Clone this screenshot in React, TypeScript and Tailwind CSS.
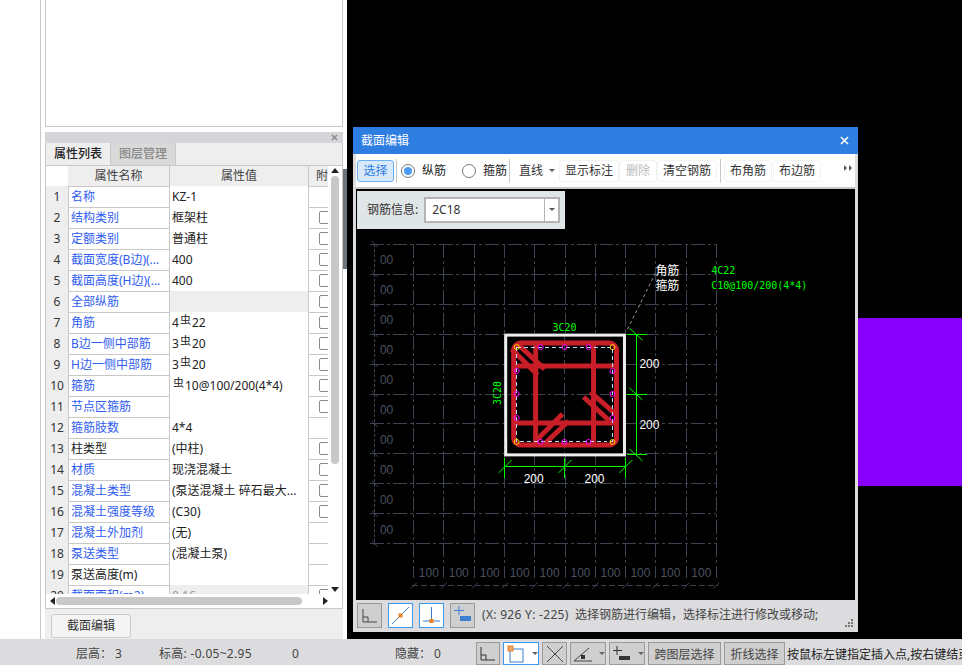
import React from "react";

const font = "font-['Noto_Sans','Noto_Sans_CJK_SC',sans-serif]";

interface RowData {
  name: string;
  value?: React.ReactNode;
  black?: boolean;
  check?: boolean;
  gray?: boolean;
}

function Steel() {
  return <span className="text-[11px] leading-[0] align-[3px] mx-px">虫</span>;
}

const rows: RowData[] = [
  { name: "名称", value: "KZ-1" },
  { name: "结构类别", value: "框架柱", check: true },
  { name: "定额类别", value: "普通柱", check: true },
  { name: "截面宽度(B边)(...", value: "400", check: true },
  { name: "截面高度(H边)(...", value: "400", check: true },
  { name: "全部纵筋", check: true, gray: true },
  { name: "角筋", value: <>4<Steel />22</>, check: true },
  { name: "B边一侧中部筋", value: <>3<Steel />20</>, check: true },
  { name: "H边一侧中部筋", value: <>3<Steel />20</>, check: true },
  { name: "箍筋", value: <><Steel />10@100/200(4*4)</>, check: true },
  { name: "节点区箍筋", check: true },
  { name: "箍筋肢数", value: "4*4" },
  { name: "柱类型", value: "(中柱)", black: true, check: true },
  { name: "材质", value: "现浇混凝土", check: true },
  { name: "混凝土类型", value: "(泵送混凝土 碎石最大...", check: true },
  { name: "混凝土强度等级", value: "(C30)", check: true },
  { name: "混凝土外加剂", value: "(无)" },
  { name: "泵送类型", value: "(混凝土泵)" },
  { name: "泵送高度(m)", black: true },
  { name: "截面面积(m2)", value: <span className="text-[#999]">0.16</span>, check: true, gray: true },
];

function PropertyRow({ row, index }: { row: RowData; index: number }) {
  return (
    <div className="grid grid-cols-[22px_101px_139px_20px] h-[21px] shrink-0 text-[12px] leading-[21px]">
      <div className="bg-[#eeeeee] border-b border-b-[#c8c8c8] text-center text-[#333]">{index + 1}</div>
      <div className={`border-l border-b border-[#c8c8c8] pl-[2px] whitespace-nowrap overflow-hidden ${row.black ? "text-[#222]" : "text-[#2f5cf0]"}`}>
        {row.name}
      </div>
      <div className={`border-l border-b border-[#c8c8c8] pl-[2px] whitespace-nowrap overflow-hidden text-[#222] ${row.gray ? "bg-[#eeeeee]" : "bg-white"}`}>
        {row.value}
      </div>
      <div className="border-l border-b border-[#c8c8c8] overflow-hidden pl-[10px] pt-[4px]">
        {row.check && <div className="w-[14px] h-[13px] border border-[#8a8a8a] rounded-[2px] bg-white" />}
      </div>
    </div>
  );
}

function Arrow({ dir }: { dir: "up" | "down" | "left" | "right" }) {
  const pts = { up: "0,6 8,6 4,1", down: "0,1 8,1 4,6", left: "6,0 6,8 1,4", right: "1,0 1,8 6,4" }[dir];
  return (
    <svg width="8" height="8" viewBox="0 0 8 8" className="shrink-0">
      <polygon points={pts} fill="#222" />
    </svg>
  );
}

function PropertyPanel() {
  return (
    <div className="flex-1 flex flex-col bg-[#eeeeee] min-h-0">
      <div className="h-[11px] bg-[#d4d5d9] flex items-center justify-end pr-[5px] shrink-0">
        <svg width="7" height="7" viewBox="0 0 7 7">
          <path d="M1 1L6 6M6 1L1 6" stroke="#8c8c8c" strokeWidth="1.6" />
        </svg>
      </div>
      <div className="h-[466px] border border-[#c8c8c8] border-t-0 flex flex-col shrink-0 bg-white">
        <div className="h-[23px] flex bg-[#eeeeee] border-b border-[#c8c8c8] shrink-0 text-[12px] leading-[22px]">
          <div className="w-[65px] text-center font-medium text-[#222] border-r border-[#c8c8c8]">属性列表</div>
          <div className="w-[65px] text-center font-medium text-[#8a8a8a] bg-[#d9d9d9] border-r border-[#c8c8c8]">图层管理</div>
        </div>
        <div className="flex flex-1 min-h-0">
          <div className="w-[282px] flex flex-col overflow-hidden">
            <div className="grid grid-cols-[22px_101px_139px_20px] h-[20px] shrink-0 text-[12px] leading-[20px] text-[#444] text-center">
              <div className="bg-white" />
              <div className="bg-[#eeeeee] border-b border-[#c8c8c8]">属性名称</div>
              <div className="bg-[#eeeeee] border-l border-b border-[#c8c8c8]">属性值</div>
              <div className="bg-[#eeeeee] border-l border-b border-[#c8c8c8] text-left pl-[7px] overflow-hidden whitespace-nowrap">附加</div>
            </div>
            <div className="h-[408px] overflow-hidden flex flex-col">
              {rows.map((row, i) => (
                <PropertyRow key={row.name} row={row} index={i} />
              ))}
            </div>
          </div>
          <div className="flex-1 flex flex-col items-center pt-[1px] pr-[1px]">
            <Arrow dir="up" />
            <div className="w-[8px] h-[288px] mt-[1px] rounded-[4px] bg-[#c8c8c8]" />
            <div className="flex-1" />
            <Arrow dir="down" />
          </div>
        </div>
        <div className="h-[14px] flex items-center shrink-0 pl-[3px] bg-white">
          <Arrow dir="left" />
          <div className="w-[246px] h-[8px] ml-[-1px] rounded-[4px] bg-[#c8c8c8]" />
          <div className="w-[20px]" />
          <Arrow dir="right" />
        </div>
      </div>
      <div className="pl-[6px] pt-[3px]">
        <button className="w-[80px] h-[24px] border border-[#c6ccd6] rounded-[3px] bg-[#f4f4f4] text-[12px] text-[#333]">截面编辑</button>
      </div>
    </div>
  );
}

function Separator() {
  return <div className="w-px h-[24px] bg-[#c8c8c8]" />;
}

function ToolButton({ label, width, muted }: { label: string; width: string; muted?: boolean }) {
  return (
    <div className={`h-[22px] ${width} text-center leading-[20px] border border-[#f3f3f3] rounded-[3px] ${muted ? "text-[#bbb]" : "text-[#333]"}`}>
      {label}
    </div>
  );
}

function Radio({ on }: { on?: boolean }) {
  return (
    <div className="w-[14px] h-[14px] rounded-full border border-[#777] bg-white flex items-center justify-center">
      {on && <div className="w-[8px] h-[8px] rounded-full bg-[#4a9bf0]" />}
    </div>
  );
}

function Toolbar() {
  return (
    <div className="h-[35px] bg-white border-b-2 border-[#c8c8c8] flex items-center pl-[1px] shrink-0 text-[12px]">
      <div className="w-[37px] h-[22px] rounded-[3px] border border-[#6ab0f5] bg-[#d8e9fb] text-[#2e7de1] text-center leading-[20px]">选择</div>
      <div className="w-[2px]" />
      <Separator />
      <div className="w-[4px]" />
      <Radio on />
      <span className="ml-[7px] text-[#222]">纵筋</span>
      <div className="w-[16px]" />
      <Radio />
      <span className="ml-[7px] text-[#222]">箍筋</span>
      <div className="w-[2px]" />
      <Separator />
      <div className="w-[4px]" />
      <div className="w-[45px] h-[22px] pl-[5px] text-[#333] flex items-center">
        直线
        <svg width="6" height="4" viewBox="0 0 6 4" className="ml-[6px]"><polygon points="0,0 6,0 3,3" fill="#555" /></svg>
      </div>
      <ToolButton label="显示标注" width="w-[60px]" />
      <ToolButton label="删除" width="w-[38px]" muted />
      <ToolButton label="清空钢筋" width="w-[60px]" />
      <div className="w-[3px]" />
      <Separator />
      <div className="w-[3px]" />
      <ToolButton label="布角筋" width="w-[48px]" />
      <div className="w-px" />
      <ToolButton label="布边筋" width="w-[48px]" />
      <div className="flex-1" />
      <svg width="8" height="6" viewBox="0 0 8 6" className="mr-[3px] mb-[6px]">
        <polygon points="0,0 0,6 3,3" fill="#555" />
        <polygon points="5,0 5,6 8,3" fill="#555" />
      </svg>
    </div>
  );
}

const gridX = [414, 444, 475, 505, 535, 566, 596, 626, 656, 687, 717];
const gridY = [244, 274, 304, 334, 364, 394, 424, 454, 484, 514, 544];
const dim = "#3c4452";

function Drawing() {
  const red = "#c81e28";
  const green = "#00ff00";
  const topBars = [541, 565, 589];
  const sideBars = [371, 394, 418];
  return (
    <svg viewBox="356 189 500 411" className="w-full h-full block">
      <g stroke={dim} fill="none" shapeRendering="crispEdges">
        {gridY.map((y) => (
          <line key={y} x1={370} y1={y} x2={717} y2={y} strokeDasharray="14 3 3 3" />
        ))}
        {gridX.map((x) => (
          <line key={x} x1={x} y1={244} x2={x} y2={578} strokeDasharray="14 3 3 3" />
        ))}
        <line x1={375} y1={244} x2={375} y2={545} strokeDasharray="3 2" />
        <line x1={412} y1={586} x2={719} y2={586} strokeDasharray="6 3" />
      </g>
      <g stroke={dim} fill="none">
        {gridY.map((y) => (
          <line key={y} x1={372} y1={y - 3} x2={378} y2={y + 3} />
        ))}
        {gridX.map((x) => (
          <line key={x} x1={x - 3} y1={589} x2={x + 3} y2={583} />
        ))}
      </g>
      <g fill="#4a5260" fontSize="12" fontFamily="Liberation Sans, sans-serif">
        {gridY.slice(0, 10).map((y) => (
          <text key={y} x={380} y={y + 20}>00</text>
        ))}
        {gridX.slice(0, 10).map((x) => (
          <text key={x} x={x + 5} y={577}>100</text>
        ))}
      </g>

      <rect x={506} y={335} width={119} height={120} fill="#000" stroke="#eeeeee" strokeWidth="3" />
      <g stroke={dim} fill="none" shapeRendering="crispEdges">
        <line x1={565} y1={337} x2={565} y2={453} strokeDasharray="14 3 3 3" />
        <line x1={508} y1={394} x2={623} y2={394} strokeDasharray="14 3 3 3" />
      </g>
      <g stroke={red} strokeWidth="5" fill="none">
        <rect x={514} y={343} width={103} height={102} rx={7} />
        <line x1={536} y1={343} x2={536} y2={445} />
        <line x1={594} y1={343} x2={594} y2={445} />
        <line x1={514} y1={366} x2={617} y2={366} />
        <line x1={514} y1={423} x2={617} y2={423} />
        <line x1={517} y1={343} x2={545} y2={369} />
        <line x1={512} y1={349} x2={538} y2={375} />
        <line x1={563} y1={414} x2={535} y2={442} />
        <line x1={569} y1={421} x2={545} y2={444} />
        <line x1={591} y1={392} x2={616} y2={414} />
        <line x1={584} y1={397} x2={610} y2={421} />
      </g>
      <rect x={517} y={347} width={96} height={95} fill="none" stroke="#bcdcff" strokeDasharray="4 3" shapeRendering="crispEdges" />
      <g fill="none" stroke="#ff00ff">
        {topBars.map((x) => (
          <React.Fragment key={x}>
            <circle cx={x} cy={347} r={2.5} />
            <circle cx={x} cy={442} r={2.5} />
          </React.Fragment>
        ))}
        {sideBars.map((y) => (
          <React.Fragment key={y}>
            <circle cx={517} cy={y} r={2.5} />
            <circle cx={613} cy={y} r={2.5} />
          </React.Fragment>
        ))}
      </g>
      <g fill="none" stroke="#ffd400">
        <circle cx={517} cy={347} r={2.5} />
        <circle cx={613} cy={347} r={2.5} />
        <circle cx={517} cy={442} r={2.5} />
        <circle cx={613} cy={442} r={2.5} />
      </g>

      <g stroke={green} fill="none">
        <g shapeRendering="crispEdges">
          <line x1={637} y1={334} x2={637} y2={456} />
          <line x1={628} y1={334} x2={648} y2={334} />
          <line x1={628} y1={394} x2={648} y2={394} />
          <line x1={628} y1={455} x2={648} y2={455} />
          <line x1={505} y1={467} x2={626} y2={467} />
          <line x1={505} y1={458} x2={505} y2={478} />
          <line x1={565} y1={458} x2={565} y2={478} />
          <line x1={626} y1={458} x2={626} y2={478} />
        </g>
        <line x1={630} y1={328} x2={643} y2={340} />
        <line x1={630} y1={388} x2={643} y2={400} />
        <line x1={630} y1={449} x2={643} y2={461} />
        <line x1={499} y1={473} x2={512} y2={460} />
        <line x1={559} y1={473} x2={572} y2={460} />
        <line x1={620} y1={473} x2={633} y2={460} />
      </g>
      <line x1={628} y1={329} x2={656} y2={273} stroke="#999" strokeDasharray="3 3" />

      <g fontFamily="DejaVu Sans Mono, monospace" fontSize="10" fill={green}>
        <text x={553} y={331}>3C20</text>
        <text x={501} y={405} transform="rotate(-90 501 405)">3C20</text>
        <text x={712} y={274}>4C22</text>
        <text x={712} y={289}>C10@100/200(4*4)</text>
      </g>
      <g fontFamily="Liberation Sans, sans-serif" fontSize="12" fill="#fff">
        <text x={640} y={368}>200</text>
        <text x={640} y={429}>200</text>
        <text x={524} y={483}>200</text>
        <text x={585} y={483}>200</text>
      </g>
      <g fontFamily="Noto Sans CJK SC, sans-serif" fontSize="12" fill="#fff">
        <text x={656} y={275}>角筋</text>
        <text x={656} y={290}>箍筋</text>
      </g>
    </svg>
  );
}

function RebarInfo() {
  return (
    <div className="absolute left-[1px] top-[2px] w-[208px] h-[38px] bg-[#e0e6e8] flex items-center pl-[10px] text-[12px] text-[#333]">
      钢筋信息:
      <div className="ml-[6px] w-[136px] h-[26px] border-2 border-[#b4b4b4] bg-white flex items-center">
        <span className="flex-1 pl-[6px]">2C18</span>
        <div className="w-[14px] h-full border-l border-[#b4b4b4] flex items-center justify-center">
          <svg width="6" height="4" viewBox="0 0 6 4"><polygon points="0,0 6,0 3,3" fill="#555" /></svg>
        </div>
      </div>
    </div>
  );
}

function IconBox({ children, active }: { children: React.ReactNode; active?: boolean }) {
  return (
    <div className={`w-[25px] h-[25px] border flex items-center justify-center ${active ? "bg-white border-[#3a9af0]" : "bg-[#cfcfcf] border-[#9a9a9a]"}`}>
      {children}
    </div>
  );
}

const orthoIcon = <path d="M5 5V18H19M5 13H10V18" stroke="#444" fill="none" />;

function SectionDialog() {
  return (
    <div className={`absolute left-[6px] top-[127px] w-[505px] h-[505px] flex flex-col bg-[#dcdcde] px-[3px] pb-[2px] ${font}`}>
      <div className="h-[27px] -mx-[3px] bg-[#2e7de1] flex items-center justify-between pl-[8px] pr-[9px] shrink-0 text-[12px] text-white">
        截面编辑
        <svg width="9" height="9" viewBox="0 0 9 9">
          <path d="M1 1L8 8M8 1L1 8" stroke="#fff" strokeWidth="1.6" />
        </svg>
      </div>
      <Toolbar />
      <div className="h-[411px] bg-black relative shrink-0">
        <Drawing />
        <RebarInfo />
      </div>
      <div className="flex-1 flex items-center pl-[1px] gap-[6px] text-[12px] text-[#444] relative">
        <IconBox>
          <svg width="23" height="23" viewBox="0 0 23 23">{orthoIcon}</svg>
        </IconBox>
        <IconBox active>
          <svg width="23" height="23" viewBox="0 0 23 23">
            <path d="M3 20L20 3" stroke="#3b7fd0" />
            <rect x="9.5" y="9.5" width="4" height="4" fill="#f08020" />
          </svg>
        </IconBox>
        <IconBox active>
          <svg width="23" height="23" viewBox="0 0 23 23">
            <path d="M11.500 3V19M3 17H20" stroke="#3b7fd0" />
            <rect x="9.5" y="15" width="4" height="4" fill="#f08020" />
          </svg>
        </IconBox>
        <IconBox>
          <svg width="23" height="23" viewBox="0 0 23 23">
            <path d="M8 2V11M3 6.500H13" stroke="#3b7fd0" />
            <rect x="9" y="12" width="11" height="5" fill="#3b7fd0" />
          </svg>
        </IconBox>
        <span className="ml-[1px] w-[87px] tracking-[0.3px] whitespace-nowrap">(X: 926 Y: -225)</span>
        <span className="whitespace-nowrap">选择钢筋进行编辑，选择标注进行修改或移动;</span>
        <svg width="10" height="10" viewBox="0 0 10 10" className="absolute right-[1px] bottom-[2px]">
          <path d="M7 1h2v2H7zM4 4h2v2H4zM7 4h2v2H7zM1 7h2v2H1zM4 7h2v2H4zM7 7h2v2H7z" fill="#777" />
        </svg>
      </div>
    </div>
  );
}

function StatusIcon({ width, active, arrow, children }: { width: string; active?: boolean; arrow?: boolean; children: React.ReactNode }) {
  return (
    <div className={`${width} h-[23px] border flex items-center justify-center gap-[5px] ${active ? "bg-white border-[#3a9af0]" : "bg-[#cfcfcf] border-[#9a9a9a]"}`}>
      <svg width="22" height="22" viewBox="0 0 22 22">{children}</svg>
      {arrow && (
        <svg width="6" height="4" viewBox="0 0 6 4"><polygon points="0,0 6,0 3,3" fill="#666" /></svg>
      )}
    </div>
  );
}

function StatusBar() {
  return (
    <div className="h-[26px] bg-[#dcdcde] flex items-end shrink-0 overflow-hidden text-[12px] text-[#444] whitespace-nowrap">
      <div className="w-[476px] h-full relative shrink-0 leading-[30px]">
        <span className="absolute left-[76px]">层高： 3</span>
        <span className="absolute left-[159px] tracking-[0.3px]">标高: -0.05~2.95</span>
        <span className="absolute left-[292px]">0</span>
        <span className="absolute left-[395px]">隐藏： 0</span>
      </div>
      <div className="flex items-end gap-[3px] shrink-0">
        <StatusIcon width="w-[24px]">
          <path d="M4 4V17H18M4 12H9V17" stroke="#333" fill="none" />
        </StatusIcon>
        <StatusIcon width="w-[36px]" active arrow>
          <rect x="5" y="6" width="13" height="13" fill="none" stroke="#3b7fd0" />
          <rect x="3" y="3" width="5" height="5" fill="#f4a460" stroke="#e08030" />
        </StatusIcon>
        <StatusIcon width="w-[25px]">
          <path d="M3 3L19 19M19 3L3 19" stroke="#444" fill="none" />
        </StatusIcon>
        <StatusIcon width="w-[36px]" arrow>
          <path d="M2 18H20M2 18L17 5" stroke="#444" fill="none" />
          <rect x="9" y="12" width="4" height="4" fill="#333" />
        </StatusIcon>
        <StatusIcon width="w-[36px]" arrow>
          <path d="M6 3V12M2 7.500H11" stroke="#333" fill="none" />
          <rect x="8" y="13" width="11" height="4" fill="#333" />
        </StatusIcon>
        <div className="w-[73px] h-[23px] border border-[#9a9a9a] bg-[#cfcfcf] text-center leading-[24px]">跨图层选择</div>
        <div className="w-[61px] h-[23px] border border-[#9a9a9a] bg-[#cfcfcf] text-center leading-[24px]">折线选择</div>
      </div>
      <span className="ml-[2px] h-full leading-[31px] text-[#222]">按鼠标左键指定插入点,按右键结束</span>
    </div>
  );
}

export default function App() {
  return (
    <div className={`w-[962px] h-[665px] flex flex-col overflow-hidden bg-white ${font}`}>
      <div className="flex-1 flex min-h-0">
        <div className="w-[40px] bg-white shrink-0" />
        <div className="w-[303px] border-l border-[#c8c8c8] pl-[4px] flex flex-col shrink-0 bg-white">
          <div className="h-[127px] border border-t-0 border-[#c8c8c8] bg-white shrink-0" />
          <div className="h-[5px] shrink-0" />
          <PropertyPanel />
        </div>
        <div className="w-[4px] shrink-0 pt-[169px] bg-white">
          <div className="h-[100px] bg-[#6c747c]" />
        </div>
        <div className="flex-1 bg-black relative">
          <SectionDialog />
          <div className="absolute left-[511px] top-[318px] right-0 h-[168px] bg-[#8a00ff]" />
        </div>
      </div>
      <StatusBar />
    </div>
  );
}
